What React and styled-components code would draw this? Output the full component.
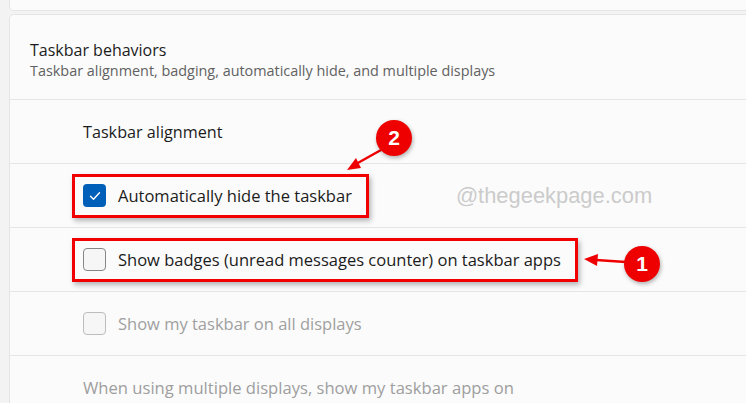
import React from "react"
import styled, { createGlobalStyle, css } from "styled-components"

const GlobalStyle = createGlobalStyle`
  html, body {
    margin: 0;
    padding: 0;
    background: #f3f3f3;
    font-family: "Open Sans", "Noto Sans", "Liberation Sans", sans-serif;
    -webkit-font-smoothing: antialiased;
  }
`

const Page = styled.div`
  position: relative;
  width: 746px;
  height: 403px;
  overflow: hidden;
  padding-left: 9px;
  box-sizing: border-box;
  display: flex;
  flex-direction: column;
  gap: 3px;
`

const TopCard = styled.div`
  flex-shrink: 0;
  height: 11px;
  margin-right: -20px;
  background: #fbfbfb;
  border: 1px solid #e5e5e5;
  border-top: none;
  border-radius: 0 0 5px 5px;
  box-sizing: border-box;
`

const Card = styled.div`
  flex-shrink: 0;
  margin-right: -20px;
  background: #fbfbfb;
  border: 1px solid #e5e5e5;
  border-bottom: none;
  border-radius: 5px 5px 0 0;
`

const Header = styled.div`
  height: 84px;
  padding: 24px 0 0 20px;
  box-sizing: border-box;
`

const Title = styled.div`
  font-size: 16px;
  color: #1b1b1b;
  line-height: 22px;
`

const Subtitle = styled.div`
  font-size: 14.4px;
  color: #616161;
  line-height: 20px;
`

const Row = styled.div`
  height: 64px;
  border-top: 1px solid #e5e5e5;
  padding-left: 62px;
  display: flex;
  align-items: center;
  box-sizing: border-box;
`

const RowText = styled.div`
  font-size: ${(p) => (p.$muted ? "16.6px" : "16.2px")};
  margin-left: 11px;
  color: ${(p) => (p.$muted ? "#9e9e9e" : "#1b1b1b")};
`

const Highlight = styled.div`
  display: inline-flex;
  align-items: center;
  gap: 12px;
  height: 44px;
  padding: 0 14px 0 8px;
  box-sizing: border-box;
  border: 3px solid ${(p) => (p.$on ? "#f20000" : "transparent")};
  ${(p) =>
    p.$on &&
    css`
      box-shadow: 2px 3px 5px rgba(0, 0, 0, 0.28);
    `}
`

const Box = styled.span`
  width: 23px;
  height: 23px;
  border-radius: 4px;
  box-sizing: border-box;
  display: inline-flex;
  align-items: center;
  justify-content: center;
  flex-shrink: 0;
  ${(p) =>
    p.$checked
      ? css`
          background: #005fb8;
        `
      : css`
          background: #f6f6f6;
          border: 1px solid ${p.$disabled ? "#bdbdbd" : "#868686"};
        `}
`

const Label = styled.span`
  font-size: 16.5px;
  white-space: nowrap;
  color: ${(p) => (p.$disabled ? "#a0a0a0" : "#1b1b1b")};
`

const Watermark = styled.span`
  margin-left: 87px;
  font-family: "Liberation Sans", Arial, sans-serif;
  font-size: 21.9px;
  color: #cbcbcb;
  white-space: nowrap;
`

const Badge = styled.div`
  position: absolute;
  left: ${(p) => p.$x}px;
  top: ${(p) => p.$y}px;
  width: 36px;
  height: 36px;
  border-radius: 50%;
  background: #ee0000;
  color: #fff;
  font-family: "Liberation Sans", Arial, sans-serif;
  font-weight: 700;
  font-size: 21px;
  display: flex;
  align-items: center;
  justify-content: center;
  box-shadow: 1px 2px 4px rgba(0, 0, 0, 0.3);
`

const Arrows = styled.svg`
  position: absolute;
  left: 0;
  top: 0;
  pointer-events: none;
`

const Check = () => (
  <svg width="12" height="10" viewBox="0 0 12 10">
    <path d="M1.5 5.2 L4.5 8.2 L10.5 1.8" fill="none" stroke="#fff" strokeWidth="1.4" strokeLinecap="round" strokeLinejoin="round" />
  </svg>
)

const CheckRow = ({ checked, disabled, highlight, label, children }) => (
  <Row>
    <Highlight $on={highlight}>
      <Box $checked={checked} $disabled={disabled}>
        {checked && <Check />}
      </Box>
      <Label $disabled={disabled}>{label}</Label>
    </Highlight>
    {children}
  </Row>
)

export default function App() {
  return (
    <>
      <GlobalStyle />
      <Page>
        <TopCard />
        <Card>
          <Header>
            <Title>Taskbar behaviors</Title>
            <Subtitle>Taskbar alignment, badging, automatically hide, and multiple displays</Subtitle>
          </Header>
          <Row>
            <RowText>Taskbar alignment</RowText>
          </Row>
          <CheckRow checked highlight label="Automatically hide the taskbar">
            <Watermark>@thegeekpage.com</Watermark>
          </CheckRow>
          <CheckRow highlight label="Show badges (unread messages counter) on taskbar apps" />
          <CheckRow disabled label="Show my taskbar on all displays" />
          <Row>
            <RowText $muted>When using multiple displays, show my taskbar apps on</RowText>
          </Row>
        </Card>

        <Arrows width="746" height="403">
          <line x1="381" y1="150" x2="356" y2="164" stroke="#ee0000" strokeWidth="2.5" />
          <polygon points="347,170 356,158 361,168" fill="#ee0000" />
          <line x1="626" y1="262" x2="596" y2="260" stroke="#ee0000" strokeWidth="2.5" />
          <polygon points="584,259 598,254 597,266" fill="#ee0000" />
        </Arrows>
        <Badge $x={376} $y={120}>2</Badge>
        <Badge $x={624} $y={246}>1</Badge>
      </Page>
    </>
  )
}
